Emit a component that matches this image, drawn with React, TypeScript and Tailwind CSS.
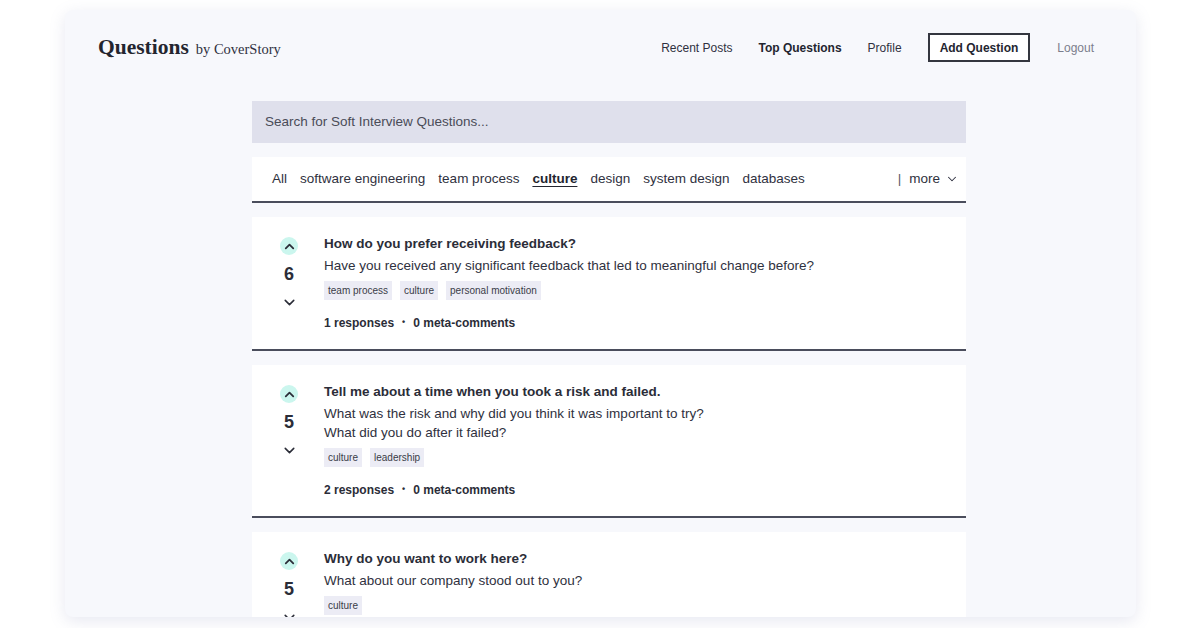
import React from 'react';

interface Question {
  id: number;
  votes: number;
  title: string;
  body: string[];
  tags: string[];
  responses?: number;
  metaComments?: number;
}

const questions: Question[] = [
  {
    id: 1,
    votes: 6,
    title: 'How do you prefer receiving feedback?',
    body: ['Have you received any significant feedback that led to meaningful change before?'],
    tags: ['team process', 'culture', 'personal motivation'],
    responses: 1,
    metaComments: 0,
  },
  {
    id: 2,
    votes: 5,
    title: 'Tell me about a time when you took a risk and failed.',
    body: ['What was the risk and why did you think it was important to try?', 'What did you do after it failed?'],
    tags: ['culture', 'leadership'],
    responses: 2,
    metaComments: 0,
  },
  {
    // last card runs past the fold, its footer isn't visible
    id: 3,
    votes: 5,
    title: 'Why do you want to work here?',
    body: ['What about our company stood out to you?'],
    tags: ['culture'],
  },
];

const categories = ['All', 'software engineering', 'team process', 'culture', 'design', 'system design', 'databases'];

const Chevron = ({ up, className, width = 2.2 }: { up?: boolean; className?: string; width?: number }) => (
  <svg className={className} fill="none" stroke="currentColor" viewBox="0 0 24 24">
    <path
      strokeLinecap="round"
      strokeLinejoin="round"
      strokeWidth={width}
      d={up ? 'M6 15l6-6 6 6' : 'M6 9l6 6 6-6'}
    />
  </svg>
);

const QuestionCard = ({ q }: { q: Question }) => (
  <div className="flex bg-white border-b-2 border-[#4a4d5c] pb-[16px]">
    <div className="w-[72px] shrink-0 flex flex-col items-center pl-[2px]">
      <div className="mt-[20px] w-[18px] h-[18px] rounded-full bg-[#cbf6ee] flex items-center justify-center text-[#2b2d38]">
        <Chevron up width={2.8} className="w-[15px] h-[15px]" />
      </div>
      <div className="mt-[5px] h-[28px] leading-[28px] text-[18px] font-bold text-[#2b2d38]">{q.votes}</div>
      <div className="mt-[6px] h-[16px] flex items-center justify-center text-[#2b2d38]">
        <Chevron className="w-[17px] h-[17px]" />
      </div>
    </div>
    <div className="flex-1 pt-[17px] pr-6">
      <h3 className="text-[13.5px] leading-[20px] font-bold text-[#2b2d38]">{q.title}</h3>
      <div className="mt-[2px] text-[13.5px] leading-[19px] text-[#2f3140]">
        {q.body.map((line) => (
          <p key={line}>{line}</p>
        ))}
      </div>
      <div className="mt-[6px] flex gap-[8px]">
        {q.tags.map((tag) => (
          <span key={tag} className="h-[19px] px-[4px] flex items-center bg-[#ececf5] text-[10px] text-[#3a3c48]">
            {tag}
          </span>
        ))}
      </div>
      {q.responses !== undefined && (
        <div className="mt-[13px] h-[20px] flex items-center gap-[8px] text-[12px] font-bold text-[#2b2d38]">
          <span>{q.responses} responses</span>
          <span className="text-[9px]">•</span>
          <span>{q.metaComments} meta-comments</span>
        </div>
      )}
    </div>
  </div>
);

export default function App() {
  return (
    <div className="w-[1200px] h-[628px] bg-white pt-[10px] pl-[65px]" style={{ fontFamily: '"Liberation Sans", Arial, sans-serif' }}>
      <div className="w-[1071px] h-[607px] bg-[#f7f8fc] rounded-[8px] overflow-hidden shadow-[0_4px_16px_rgba(120,125,180,0.18)]">
        {/* Header */}
        <header className="h-[74px] flex items-center justify-between pl-[33px] pr-[42px] pt-[1px]">
          <div className="flex items-baseline gap-[7px]" style={{ fontFamily: '"Liberation Serif", Georgia, serif' }}>
            <span className="text-[21.5px] font-bold text-[#23252f]">Questions</span>
            <span className="text-[14.5px] text-[#2f3140]">by CoverStory</span>
          </div>
          <nav className="flex items-center text-[12px] text-[#2f3140]">
            <a>Recent Posts</a>
            <a className="ml-[26px] font-bold text-[#23252f]">Top Questions</a>
            <a className="ml-[26px]">Profile</a>
            <button className="ml-[26px] h-[29px] px-[10px] border-2 border-[#34363f] bg-white font-bold text-[#23252f] text-[12px]">
              Add Question
            </button>
            <a className="ml-[27px] text-[#7b7e8c]">Logout</a>
          </nav>
        </header>

        {/* Main column */}
        <main className="ml-[187px] w-[714px] mt-[17px]">
          <div className="h-[42px] bg-[#dfe0ec] flex items-center px-[13px] text-[13.5px] text-[#4a4c58]">
            Search for Soft Interview Questions...
          </div>

          <div className="mt-[14px] h-[46px] bg-white border-b-2 border-[#4a4d5c] flex items-center pl-[20px] pr-[7px] text-[13.5px] text-[#2f3140]">
            <div className="flex items-center gap-[13px]">
              {categories.map((c) => (
                <span
                  key={c}
                  className={c === 'culture' ? 'font-bold underline underline-offset-[3px] text-[#23252f]' : ''}
                >
                  {c}
                </span>
              ))}
            </div>
            <div className="ml-auto flex items-center">
              <span className="text-[#5a5c68] mr-[8px]">|</span>
              <span>more</span>
              <Chevron className="w-[14px] h-[14px] ml-[5px]" width={1.8} />
            </div>
          </div>

          <div className="mt-[14px] flex flex-col gap-[14px]">
            {questions.map((q) => (
              <QuestionCard key={q.id} q={q} />
            ))}
          </div>
        </main>
      </div>
    </div>
  );
}
